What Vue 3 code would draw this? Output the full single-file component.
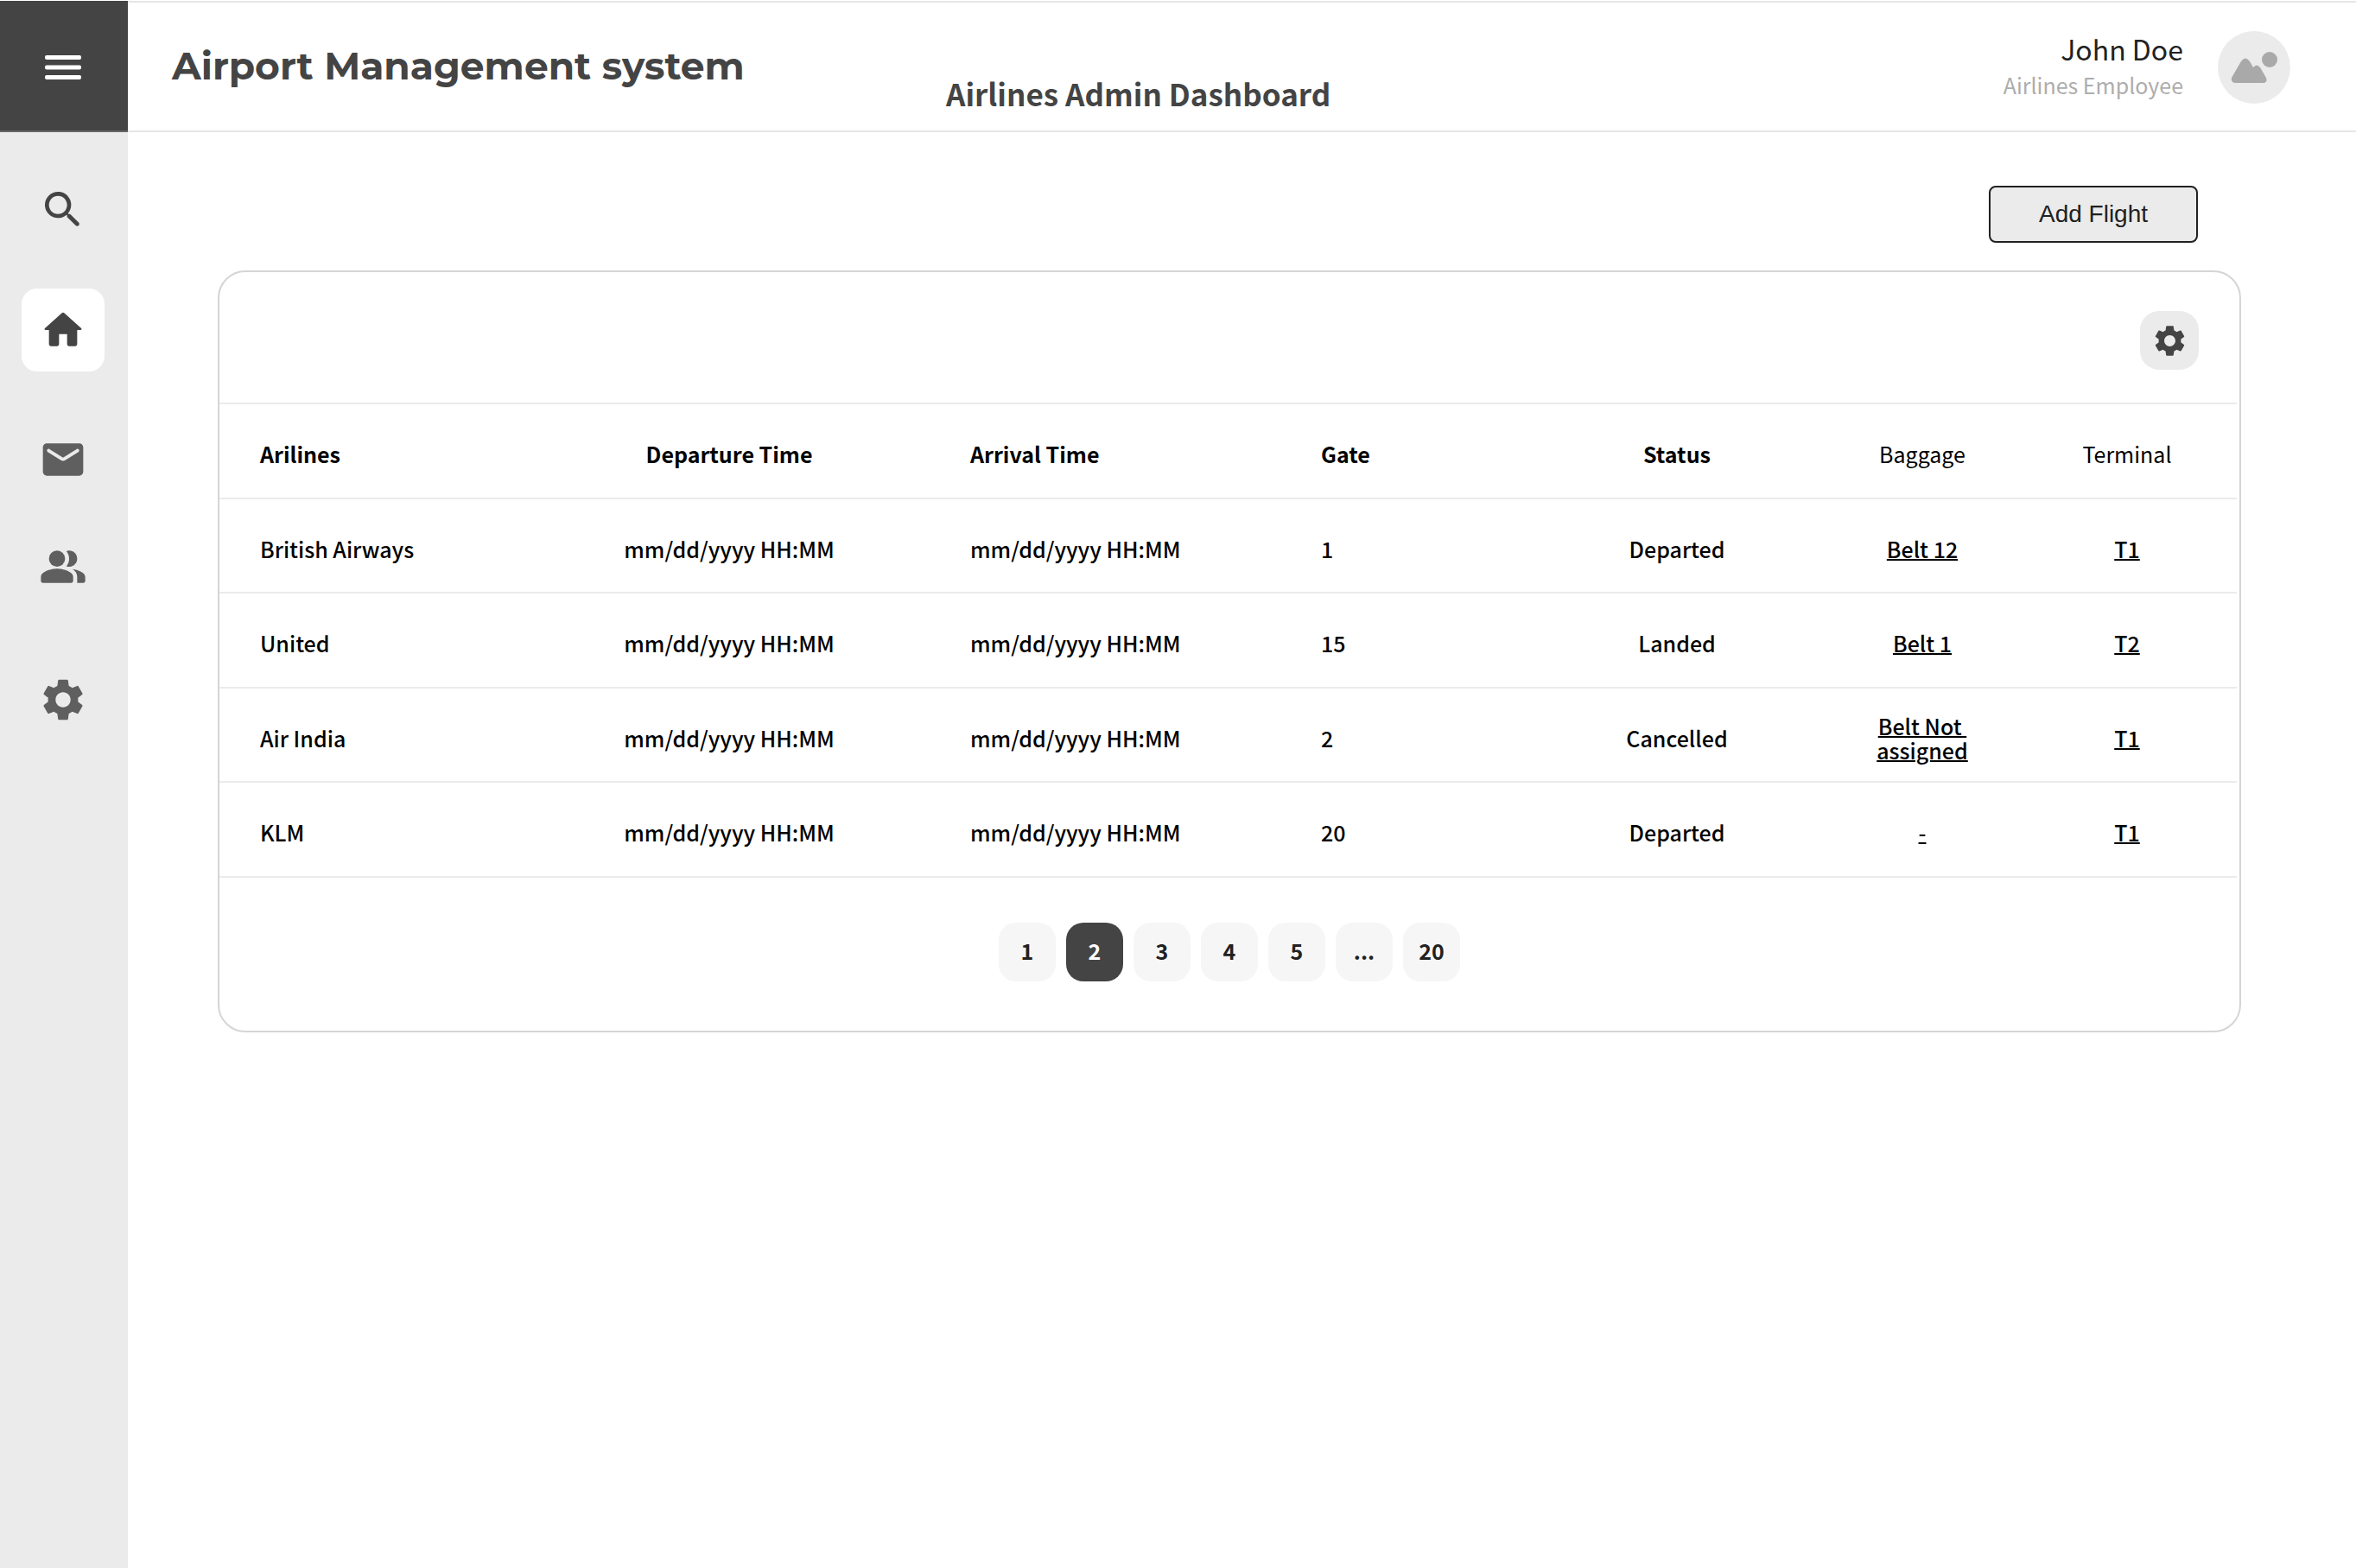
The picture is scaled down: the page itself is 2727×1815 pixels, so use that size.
<script setup>
import { ref } from 'vue'

const gear =
  'M19.14 12.94c.04-.3.06-.61.06-.94 0-.32-.02-.64-.07-.94l2.03-1.58c.18-.14.23-.41.12-.61l-1.92-3.32c-.12-.22-.37-.29-.59-.22l-2.39.96c-.5-.38-1.03-.7-1.62-.94l-.36-2.54c-.04-.24-.24-.41-.48-.41h-3.84c-.24 0-.43.17-.47.41l-.36 2.54c-.59.24-1.13.57-1.62.94l-2.39-.96c-.22-.08-.47 0-.59.22L2.74 8.87c-.12.21-.08.47.12.61l2.03 1.58c-.05.3-.09.63-.09.94s.02.64.07.94l-2.03 1.58c-.18.14-.23.41-.12.61l1.92 3.32c.12.22.37.29.59.22l2.39-.96c.5.38 1.03.7 1.62.94l.36 2.54c.05.24.24.41.48.41h3.84c.24 0 .44-.17.47-.41l.36-2.54c.59-.24 1.13-.56 1.62-.94l2.39.96c.22.08.47 0 .59-.22l1.92-3.32c.12-.22.07-.47-.12-.61l-2.01-1.58zM12 15.6c-1.98 0-3.6-1.62-3.6-3.6s1.62-3.6 3.6-3.6 3.6 1.62 3.6 3.6-1.62 3.6-3.6 3.6z'

const placeholder = 'mm/dd/yyyy HH:MM'
const flights = [
  { airline: 'British Airways', gate: '1', status: 'Departed', belt: 'Belt 12', terminal: 'T1' },
  { airline: 'United', gate: '15', status: 'Landed', belt: 'Belt 1', terminal: 'T2' },
  { airline: 'Air India', gate: '2', status: 'Cancelled', belt: 'Belt Not \nassigned', terminal: 'T1' },
  { airline: 'KLM', gate: '20', status: 'Departed', belt: '-', terminal: 'T1' },
]

const pages = ['1', '2', '3', '4', '5', '...', '20']
const current = ref('2')
</script>

<template>
  <div class="app">
    <aside class="sidebar">
      <button class="menu" type="button" aria-label="Menu">
        <svg viewBox="0 0 42 28" width="42" height="28">
          <rect width="42" height="5" rx="2" />
          <rect y="11.5" width="42" height="5" rx="2" />
          <rect y="23" width="42" height="5" rx="2" />
        </svg>
      </button>
      <nav class="nav">
        <a class="item" href="#search" aria-label="Search">
          <svg viewBox="0 0 24 24" width="56" height="56">
            <path d="M15.5 14h-.79l-.28-.27c1.2-1.4 1.82-3.31 1.48-5.34-.47-2.78-2.79-5-5.59-5.34-4.23-.52-7.79 3.04-7.27 7.27.34 2.8 2.56 5.12 5.34 5.59 2.03.34 3.94-.28 5.34-1.48l.27.28v.79l4.25 4.25c.41.41 1.08.41 1.49 0 .41-.41.41-1.08 0-1.49L15.5 14zm-6 0C7.01 14 5 11.99 5 9.5S7.01 5 9.5 5 14 7.01 14 9.5 11.99 14 9.5 14z" />
          </svg>
        </a>
        <a class="item active" href="#home" aria-label="Home">
          <svg viewBox="0 0 24 24" width="56" height="56">
            <path d="M10 19v-5h4v5c0 .55.45 1 1 1h3c.55 0 1-.45 1-1v-7h1.7c.46 0 .68-.57.33-.87L12.67 3.6c-.38-.34-.96-.34-1.34 0l-8.36 7.53c-.34.3-.13.87.33.87H5v7c0 .55.45 1 1 1h3c.55 0 1-.45 1-1z" />
          </svg>
        </a>
        <a class="item soft" href="#messages" aria-label="Messages">
          <svg viewBox="0 0 24 24" width="56" height="56">
            <path d="M20 4H4c-1.100 0-2 .9-2 2v12c0 1.100.9 2 2 2h16c1.100 0 2-.9 2-2V6c0-1.100-.9-2-2-2zm-.4 4.250l-6.540 4.090c-.65.41-1.470.41-2.120 0L4.400 8.250c-.25-.16-.4-.43-.4-.72 0-.67.73-1.070 1.300-.72L12 11l6.700-4.190c.57-.35 1.300.05 1.300.72 0 .29-.15.56-.4.72z" />
          </svg>
        </a>
        <a class="item soft" href="#people" aria-label="People">
          <svg viewBox="0 0 24 24" width="56" height="56">
            <circle cx="9" cy="8" r="4" />
            <path d="M9 13c-2.670 0-8 1.340-8 4v2c0 .55.45 1 1 1h14c.55 0 1-.45 1-1v-2c0-2.660-5.330-4-8-4z" />
            <path d="M15 12c2.210 0 4-1.790 4-4s-1.790-4-4-4c-.47 0-.91.1-1.330.24C14.500 5.270 15 6.580 15 8s-.5 2.730-1.330 3.760c.42.14.86.24 1.330.24z" />
            <path d="M16.670 13.130C18.040 14.060 19 15.320 19 17v3h3c.55 0 1-.45 1-1v-2c0-2.180-3.570-3.470-6.330-3.870z" />
          </svg>
        </a>
        <a class="item soft last" href="#settings" aria-label="Settings">
          <svg viewBox="0 0 24 24" width="58" height="58"><path :d="gear" /></svg>
        </a>
      </nav>
    </aside>

    <div class="page">
      <header class="header">
        <h1 class="brand">Airport Management system</h1>
        <h2 class="heading">Airlines Admin Dashboard</h2>
        <div class="user">
          <div class="who">
            <span class="name">John Doe</span>
            <span class="role">Airlines Employee</span>
          </div>
          <svg class="avatar" viewBox="0 0 84 84" width="84" height="84" aria-hidden="true">
            <circle cx="42" cy="42" r="42" fill="#ebebeb" />
            <path d="M27 35Q32 28 37 35L41 42Q45 37 49 42L56 54Q58 60 52 60H21Q15 60 16 54Z" fill="#a9a9a9" />
            <circle cx="60" cy="33" r="9" fill="#a9a9a9" />
          </svg>
        </div>
      </header>

      <main class="content">
        <div class="actions">
          <button class="add" type="button">Add Flight</button>
        </div>

        <section class="card">
          <div class="toolbar">
            <button class="config" type="button" aria-label="Table settings">
              <svg viewBox="0 0 24 24" width="43" height="43"><path :d="gear" /></svg>
            </button>
          </div>

          <table class="flights">
            <colgroup>
              <col class="c-airline" />
              <col class="c-departure" />
              <col class="c-arrival" />
              <col class="c-gate" />
              <col class="c-status" />
              <col class="c-baggage" />
              <col class="c-terminal" />
            </colgroup>
            <thead>
              <tr>
                <th scope="col">Arilines</th>
                <th scope="col" class="mid">Departure Time</th>
                <th scope="col">Arrival Time</th>
                <th scope="col">Gate</th>
                <th scope="col" class="mid">Status</th>
                <th scope="col" class="mid light">Baggage</th>
                <th scope="col" class="mid light">Terminal</th>
              </tr>
            </thead>
            <tbody>
              <tr v-for="flight in flights" :key="flight.airline">
                <td>{{ flight.airline }}</td>
                <td class="mid">{{ placeholder }}</td>
                <td>{{ placeholder }}</td>
                <td>{{ flight.gate }}</td>
                <td class="mid">{{ flight.status }}</td>
                <td class="mid"><a href="#baggage">{{ flight.belt }}</a></td>
                <td class="mid"><a href="#terminal">{{ flight.terminal }}</a></td>
              </tr>
            </tbody>
          </table>

          <nav class="pager" aria-label="Pages">
            <button
              v-for="page in pages"
              :key="page"
              type="button"
              :class="{ current: page === current }"
              @click="current = page"
            >{{ page }}</button>
          </nav>
        </section>
      </main>
    </div>
  </div>
</template>

<style>
body {
  background: #fff;
}
</style>

<style scoped>
.app,
.app * {
  box-sizing: border-box;
}
.app {
  display: flex;
  min-height: 100vh;
  padding-top: 1px;
  font-family: "Source Sans Pro", "Noto Sans CJK SC", "Noto Sans", sans-serif;
  font-size: 25px;
  line-height: 28px;
  color: #000;
}
button {
  font: inherit;
  padding: 0;
  border: 0;
  cursor: pointer;
}
svg {
  display: block;
  fill: currentColor;
}

.sidebar {
  flex: 0 0 148px;
  background: #ebebeb;
}
.menu {
  display: flex;
  align-items: center;
  justify-content: center;
  width: 100%;
  height: 152px;
  padding: 4px 2px 0 0;
  border-bottom: 2px solid #666;
  background: #444;
  color: #fff;
}
.nav {
  display: flex;
  flex-direction: column;
  align-items: center;
  gap: 28px;
  padding: 42px 2px 0 0;
}
.item {
  display: flex;
  align-items: center;
  justify-content: center;
  width: 96px;
  height: 96px;
  border-radius: 18px;
  color: #444;
}
.item.active {
  margin: 15px 0 26px;
  background: #fff;
}
.item.soft {
  color: #5f5f5f;
}
.item.last {
  margin-top: 30px;
}

.page {
  flex: 1;
  min-width: 0;
}
.header {
  display: grid;
  grid-template-columns: 896px 1fr auto;
  height: 152px;
  padding: 0 76px 0 51px;
  border: solid #e6e6e6;
  border-width: 2px 0;
}
.brand,
.heading {
  margin: 0;
  color: #444;
}
.brand {
  padding-top: 47px;
  font: 700 44px/52px Montserrat, Inter, sans-serif;
}
.heading {
  padding-top: 81px;
  font-size: 35px;
  line-height: 48px;
  font-weight: 700;
}
.user {
  display: flex;
  align-items: center;
  gap: 40px;
  padding-top: 2px;
}
.who {
  display: flex;
  flex-direction: column;
  text-align: right;
}
.name {
  font-size: 32px;
  line-height: 44px;
  color: #212121;
}
.role {
  font-size: 25px;
  line-height: 40px;
  color: #adadad;
}
.who {
  padding-bottom: 4px;
}

.content {
  padding: 62px 133px 0 104px;
}
.actions {
  display: flex;
  justify-content: flex-end;
  padding-right: 50px;
}
.add {
  width: 242px;
  height: 66px;
  border: 2px solid #212121;
  border-radius: 8px;
  background: #ebebeb;
  color: #212121;
  font: 28px/32px "Liberation Sans", Arial, sans-serif;
}
.card {
  margin-top: 32px;
  border: 2px solid #d5d5d5;
  border-radius: 32px;
}
.toolbar {
  display: flex;
  justify-content: flex-end;
  padding: 45px 47px 38px;
}
.config {
  display: flex;
  align-items: center;
  justify-content: center;
  width: 68px;
  height: 68px;
  border-radius: 22px;
  background: #ebebeb;
  color: #444;
}

.flights {
  width: calc(100% - 3px);
  table-layout: fixed;
  border-collapse: separate;
  border-spacing: 0;
  border-bottom: 2px solid #ebebeb;
}
.c-airline { width: 358px; }
.c-departure { width: 464px; }
.c-arrival { width: 406px; }
.c-gate { width: 285px; }
.c-status { width: 348px; }
.c-baggage { width: 220px; }
.c-terminal { width: 254px; }
.flights th,
.flights td {
  height: 110px;
  padding: 6px 0 0 47px;
  border-top: 2px solid #ebebeb;
  text-align: left;
  font-weight: 500;
}
.flights tr:nth-child(odd) td {
  height: 109px;
}
.flights th {
  font-weight: 700;
}
.flights .mid {
  padding-left: 0;
  text-align: center;
}
.flights .light {
  font-weight: 400;
}
.flights a {
  color: inherit;
  white-space: pre;
  text-decoration: underline;
  text-decoration-thickness: 2px;
}

.pager {
  display: flex;
  justify-content: center;
  gap: 12px;
  padding: 52px 0 57px;
}
.pager button {
  width: 66px;
  height: 68px;
  padding-bottom: 4px;
  border-radius: 20px;
  background: #f6f6f6;
  color: #212121;
  font-weight: 700;
}
.pager .current {
  background: #444;
  color: #fff;
}
</style>
